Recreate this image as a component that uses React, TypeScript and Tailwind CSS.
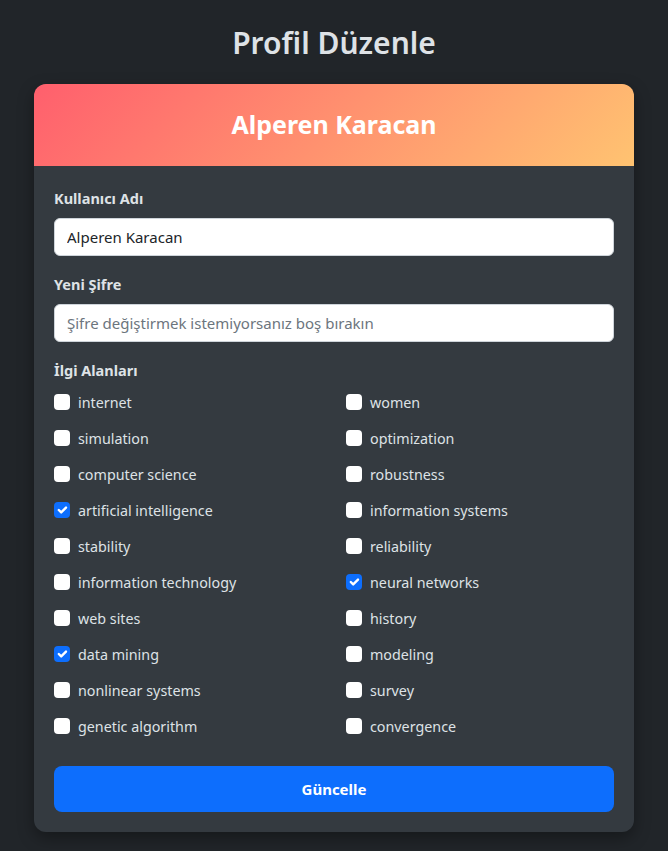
import { useState } from "react";

const konular = [
    "internet", "women",
    "simulation", "optimization",
    "computer science", "robustness",
    "artificial intelligence", "information systems",
    "stability", "reliability",
    "information technology", "neural networks",
    "web sites", "history",
    "data mining", "modeling",
    "nonlinear systems", "survey",
    "genetic algorithm", "convergence",
];

function Kutu({ label, checked, onToggle }: { label: string; checked: boolean; onToggle: () => void }) {
    return (
        <label className="flex h-6 cursor-pointer items-center gap-2 text-[14.3px] text-[#dee2e6]">
            <span
                onClick={onToggle}
                className={
                    checked
                        ? "flex h-4 w-4 items-center justify-center rounded-[4px] bg-[#0d6efd]"
                        : "flex h-4 w-4 items-center justify-center rounded-[4px] bg-white"
                }
            >
                {checked && (
                    <svg viewBox="0 0 20 20" className="h-4 w-4">
                        <path d="M6 10l3 3 6-6" fill="none" stroke="#fff" strokeWidth="3" strokeLinecap="round" strokeLinejoin="round" />
                    </svg>
                )}
            </span>
            <span className="pt-px">{label}</span>
        </label>
    );
}

export default function App() {
    const [secili, setSecili] = useState<string[]>(["artificial intelligence", "neural networks", "data mining"]);

    function toggle(k: string) {
        setSecili((s) => (s.includes(k) ? s.filter((x) => x !== k) : [...s, k]));
    }

    return (
        <div className="min-h-[851px] bg-[#212529] pt-6 font-['Noto_Sans',sans-serif]">
            <h2 className="mb-[22px] h-[38px] text-center text-[30px] font-semibold leading-[38px] text-[#dee2e6]">
                Profil Düzenle
            </h2>

            <div className="mx-auto w-[600px] overflow-hidden rounded-xl bg-[#343a40] shadow-[0_6px_16px_rgba(0,0,0,0.35)]">
                <div className="flex h-[82px] items-center justify-center bg-[linear-gradient(135deg,#ff5f6d,#ffc371)]">
                    <h3 className="text-[25px] font-bold text-white">Alperen Karacan</h3>
                </div>

                <div className="p-5">
                    <label className="mb-2 block text-[14.5px] font-bold leading-6 text-[#dee2e6]">Kullanıcı Adı</label>
                    <input
                        defaultValue="Alperen Karacan"
                        className="mb-4 block h-[38px] w-full rounded-md border border-[#ced4da] bg-white px-3 text-[15px] text-[#212529] outline-none"
                    />

                    <label className="mb-2 block text-[14.5px] font-bold leading-6 text-[#dee2e6]">Yeni Şifre</label>
                    <input
                        type="password"
                        placeholder="Şifre değiştirmek istemiyorsanız boş bırakın"
                        className="mb-4 block h-[38px] w-full rounded-md border border-[#ced4da] bg-white px-3 text-[15px] text-[#212529] outline-none placeholder:text-[#6c757d]"
                    />

                    <label className="mb-2 block text-[14.5px] font-bold leading-6 text-[#dee2e6]">İlgi Alanları</label>
                    <div className="grid grid-cols-2 gap-x-6 gap-y-3">
                        {konular.map((k) => (
                            <Kutu key={k} label={k} checked={secili.includes(k)} onToggle={() => toggle(k)} />
                        ))}
                    </div>

                    <button className="mt-[28px] h-[46px] w-full rounded-lg bg-[#0d6efd] text-[15px] font-bold text-white">
                        Güncelle
                    </button>
                </div>
            </div>
        </div>
    );
}
